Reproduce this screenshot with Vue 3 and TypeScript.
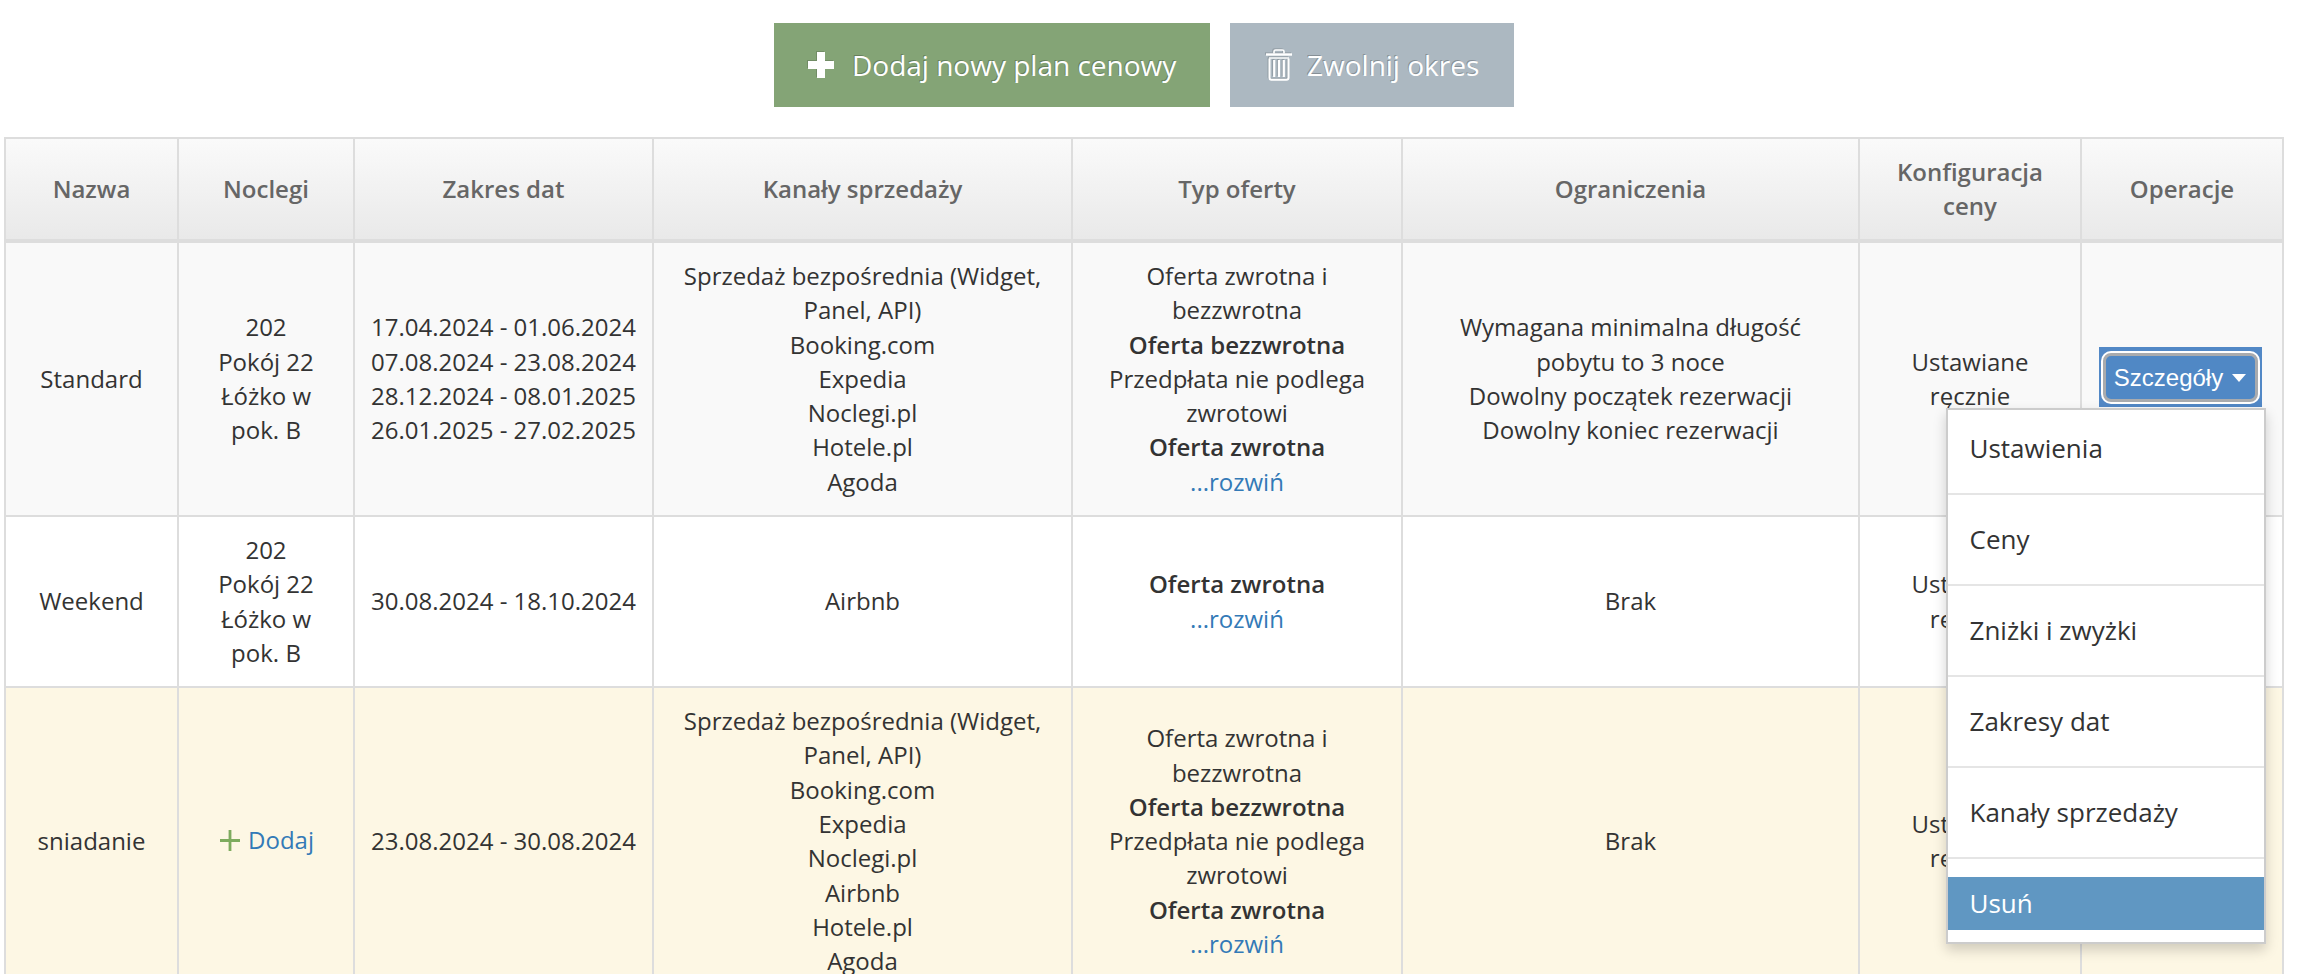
<script setup lang="ts">
interface Offer { text: string; bold?: boolean }
interface Row {
  name: string
  rooms: string[]
  dates: string[]
  channels: string[]
  offers: Offer[]
  limits: string[]
  tone: string
}

const heads = ['Nazwa', 'Noclegi', 'Zakres dat', 'Kanały sprzedaży', 'Typ oferty', 'Ograniczenia', 'Konfiguracja ceny', 'Operacje']
const widths = [173, 176, 299, 419, 330, 457, 222, 202]

const fullOffers: Offer[] = [
  { text: 'Oferta zwrotna i bezzwrotna' },
  { text: 'Oferta bezzwrotna', bold: true },
  { text: 'Przedpłata nie podlega zwrotowi' },
  { text: 'Oferta zwrotna', bold: true },
]

const rows: Row[] = [
  {
    name: 'Standard',
    rooms: ['202', 'Pokój 22', 'Łóżko w pok. B'],
    dates: ['17.04.2024 - 01.06.2024', '07.08.2024 - 23.08.2024', '28.12.2024 - 08.01.2025', '26.01.2025 - 27.02.2025'],
    channels: ['Sprzedaż bezpośrednia (Widget, Panel, API)', 'Booking.com', 'Expedia', 'Noclegi.pl', 'Hotele.pl', 'Agoda'],
    offers: fullOffers,
    limits: ['Wymagana minimalna długość pobytu to 3 noce', 'Dowolny początek rezerwacji', 'Dowolny koniec rezerwacji'],
    tone: 'tone-grey',
  },
  {
    name: 'Weekend',
    rooms: ['202', 'Pokój 22', 'Łóżko w pok. B'],
    dates: ['30.08.2024 - 18.10.2024'],
    channels: ['Airbnb'],
    offers: [{ text: 'Oferta zwrotna', bold: true }],
    limits: ['Brak'],
    tone: 'tone-white',
  },
  {
    name: 'sniadanie',
    rooms: [],
    dates: ['23.08.2024 - 30.08.2024'],
    channels: ['Sprzedaż bezpośrednia (Widget, Panel, API)', 'Booking.com', 'Expedia', 'Noclegi.pl', 'Airbnb', 'Hotele.pl', 'Agoda'],
    offers: fullOffers,
    limits: ['Brak'],
    tone: 'tone-cream',
  },
]

const menu = ['Ustawienia', 'Ceny', 'Zniżki i zwyżki', 'Zakresy dat', 'Kanały sprzedaży', 'Usuń']
</script>

<template>
  <div class="page">
    <div class="toolbar">
      <button class="tool tool-add" type="button">
        <svg class="ico-plus" width="26" height="26" viewBox="0 0 26 26" aria-hidden="true">
          <path d="M9 0h8v9h9v8h-9v9H9v-9H0V9h9z" fill="#fff" />
        </svg>
        <span>Dodaj nowy plan cenowy</span>
      </button>
      <button class="tool tool-free" type="button">
        <svg class="ico-trash" width="26" height="32" viewBox="0 0 26 32" fill="none" stroke="#fff" aria-hidden="true">
          <path d="M8 4.5V2.6Q8 1 9.6 1h6.8Q18 1 18 2.6v1.9" stroke-width="1.6" />
          <path d="M0 5.5h26" stroke-width="2.4" />
          <path d="M3.5 9.5v19.2q0 2 2 2h15q2 0 2-2V9.5" stroke-width="2" />
          <path d="M3 9h20" stroke-width="1.4" />
          <path d="M8.2 11v17M13 11v17M17.8 11v17" stroke-width="2.2" />
        </svg>
        <span>Zwolnij okres</span>
      </button>
    </div>

    <table class="plans">
      <colgroup>
        <col v-for="(w, i) in widths" :key="i" :style="{ width: w + 'px' }" />
      </colgroup>
      <thead>
        <tr>
          <th v-for="h in heads" :key="h">{{ h }}</th>
        </tr>
      </thead>
      <tbody>
        <tr v-for="(row, r) in rows" :key="row.name" :class="row.tone">
          <td>{{ row.name }}</td>
          <td>
            <template v-if="row.rooms.length">
              <div v-for="room in row.rooms" :key="room">{{ room }}</div>
            </template>
            <a v-else class="add-link" href="#">
              <svg width="20" height="21" viewBox="0 0 20 21" aria-hidden="true">
                <path d="M8.6 0h2.8v9.1H20v2.8h-8.6V21H8.6v-9.1H0V9.1h8.6z" fill="#7dab5e" />
              </svg>
              <span>Dodaj</span>
            </a>
          </td>
          <td>
            <div v-for="d in row.dates" :key="d">{{ d }}</div>
          </td>
          <td>
            <div v-for="c in row.channels" :key="c">{{ c }}</div>
          </td>
          <td>
            <div v-for="o in row.offers" :key="o.text" :class="{ strong: o.bold }">{{ o.text }}</div>
            <a class="expand" href="#">...rozwiń</a>
          </td>
          <td>
            <div v-for="l in row.limits" :key="l">{{ l }}</div>
          </td>
          <td>Ustawiane ręcznie</td>
          <td class="ops">
            <div v-if="r === 0" class="dropdown">
              <span class="focus-box">
                <button class="details" type="button">Szczegóły<i class="caret"></i></button>
              </span>
              <ul class="menu">
                <li v-for="(m, i) in menu" :key="m" :class="{ last: i === menu.length - 1 }">
                  <a href="#" :class="{ active: i === menu.length - 1 }">{{ m }}</a>
                </li>
              </ul>
            </div>
          </td>
        </tr>
      </tbody>
    </table>
  </div>
</template>

<style scoped>
.page {
  font-family: "Open Sans", sans-serif;
  font-size: 24px;
  line-height: 34.28px;
  color: #333;
}

.toolbar {
  display: flex;
  justify-content: center;
  gap: 20px;
  padding: 23px 20px 30px 0;
}

.tool {
  display: flex;
  align-items: center;
  height: 84px;
  border: 0;
  color: #fff;
  font-family: "Open Sans", sans-serif;
  font-size: 28px;
  text-shadow: -1px -1px 0 rgba(0, 0, 0, 0.22);
}

.tool-add {
  width: 436px;
  padding: 0 0 0 34px;
  gap: 18px;
  background: #84a476;
}

.tool-free {
  width: 284px;
  padding: 0 0 0 36px;
  gap: 15px;
  background: #acb8c1;
}

.ico-plus,
.ico-trash {
  flex: none;
  filter: drop-shadow(-1px -1px 0 rgba(0, 0, 0, 0.14));
}

.plans {
  table-layout: fixed;
  border-collapse: collapse;
  width: 2278px;
  margin-left: 4px;
}

.plans th,
.plans td {
  border: 2px solid #ddd;
  padding: 16px;
  text-align: center;
  vertical-align: middle;
  font-weight: 400;
}

.plans th {
  height: 100px;
  padding-top: 0;
  padding-bottom: 0;
  border-bottom-width: 4px;
  background: linear-gradient(#fafafa, #e9e9e9);
  color: #666;
  font-weight: 600;
}

.tone-grey td {
  background: #f9f9f9;
}

.tone-white td {
  background: #fff;
}

.tone-cream td {
  background: #fdf7e4;
}

.strong {
  font-weight: 600;
}

.expand,
.add-link {
  color: #337ab7;
  text-decoration: none;
}

.add-link {
  display: inline-flex;
  align-items: center;
  gap: 8px;
  margin-left: 2px;
}

.dropdown {
  position: relative;
  display: block;
  width: fit-content;
  margin: 0 auto 3px;
  transform: translateX(-2px);
  line-height: 0;
}

.focus-box {
  display: block;
  padding: 6px 4px 5px;
  background: #5288c6;
}

.details {
  display: flex;
  align-items: center;
  justify-content: center;
  width: 155px;
  height: 49px;
  padding: 0;
  border: 3px solid #a9abae;
  border-radius: 8px;
  background: #5088c5;
  box-shadow: 0 0 0 2px #fff;
  color: #fff;
  font-family: "Liberation Sans", Arial, sans-serif;
  font-size: 24px;
  line-height: 34px;
}

.caret {
  display: block;
  width: 0;
  height: 0;
  margin-left: 9px;
  border-top: 8px solid #fff;
  border-left: 7px solid transparent;
  border-right: 7px solid transparent;
}

.menu {
  position: absolute;
  top: calc(100% + 1px);
  right: -4px;
  z-index: 5;
  box-sizing: border-box;
  width: 320px;
  margin: 0;
  padding: 0;
  list-style: none;
  background: #fff;
  border: 2px solid #ccc;
  box-shadow: 0 6px 12px rgba(0, 0, 0, 0.18);
  text-align: left;
  font-size: 26px;
  line-height: 35px;
}

.menu li {
  padding: 18px 0;
  border-bottom: 2px solid #e5e5e5;
}

.menu li:first-child {
  padding-top: 12px;
}

.menu li.last {
  padding-bottom: 12px;
  border-bottom: 0;
}

.menu a {
  display: block;
  padding: 9px 22px;
  color: #333;
  text-decoration: none;
}

.menu a.active {
  background: #6097c2;
  color: #fff;
}
</style>

<style>
html,
body {
  margin: 0;
  overflow: hidden;
  background: #fff;
}
</style>
